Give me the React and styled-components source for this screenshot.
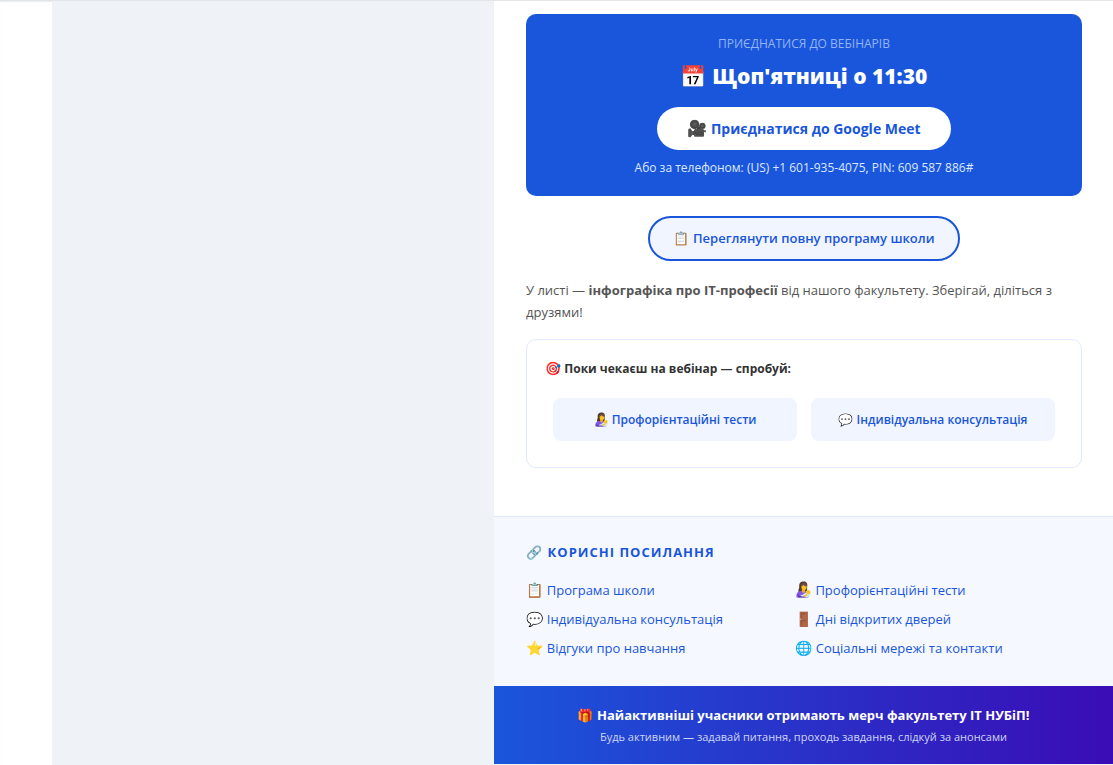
import styled, { createGlobalStyle } from "styled-components";

const GlobalStyle = createGlobalStyle`
  * {
    box-sizing: border-box;
  }
  body {
    margin: 0;
    background: #fff;
    color: #333;
    font-family: "Open Sans", "Noto Sans", "Noto Color Emoji", sans-serif;
  }
  p, h2, h3 {
    margin: 0;
  }
  a {
    text-decoration: none;
  }
`;

const Viewer = styled.div`
  min-height: 100vh;
  padding-left: 52px;
  border-top: 1px solid #e3e6e9;
  box-shadow: inset 0 1px 1px #e9ecef;
`;

const Backdrop = styled.div`
  min-height: calc(100vh - 1px);
  padding-left: 442px;
  background: #eff3f8;
`;

const Letter = styled.main`
  background: #fff;
`;

const Body = styled.div`
  padding: 13px 31px 48px 32px;
`;

const Emoji = styled.span`
  font-size: ${(props) => props.$size}px;
  line-height: 1;
`;

const MotherSvg = styled.svg`
  display: inline-block;
  width: ${(props) => props.$size}px;
  height: ${(props) => props.$size}px;
  vertical-align: -3px;
`;

const MeetCard = styled.section`
  display: flex;
  flex-direction: column;
  align-items: center;
  padding: 20px 24px 18px;
  border-radius: 10px;
  background: #1a56db;
  color: #fff;
  text-align: center;
`;

const Overline = styled.p`
  font-size: 12px;
  line-height: 20px;
  color: #93b4f5;
`;

const MeetTime = styled.h2`
  margin-top: 6px;
  font-size: 21px;
  line-height: 32px;
  font-weight: 800;
`;

const MeetButton = styled.a`
  margin-top: 15px;
  padding: 0 30px;
  border-radius: 22px;
  background: #fff;
  color: #1a56db;
  font-size: 14px;
  line-height: 43px;
  font-weight: 700;
`;

const Phone = styled.p`
  margin-top: 8px;
  font-size: 12px;
  line-height: 20px;
  color: #dbe8ff;
`;

const ProgramRow = styled.div`
  margin: 20px 0 18px;
  text-align: center;
`;

const ProgramLink = styled.a`
  display: inline-block;
  padding: 0 23px;
  border: 2px solid #1a56db;
  border-radius: 23px;
  background: #f0f5ff;
  color: #1a56db;
  font-size: 13px;
  line-height: 41px;
  font-weight: 600;
  vertical-align: top;
`;

const Note = styled.p`
  font-size: 13px;
  line-height: 22px;
  color: #555;
`;

const TryBox = styled.section`
  margin-top: 16px;
  padding: 18px;
  border: 1px solid #e0e9ff;
  border-radius: 10px;
`;

const TryTitle = styled.h3`
  font-size: 12px;
  line-height: 22px;
  font-weight: 700;
`;

const TryLinks = styled.div`
  display: grid;
  grid-template-columns: 1fr 1fr;
  gap: 14px;
  padding: 18px 8px 8px;
`;

const TryLink = styled.a`
  border-radius: 8px;
  background: #f0f5ff;
  color: #1a56db;
  font-size: 12px;
  line-height: 43px;
  font-weight: 600;
  text-align: center;
`;

const Useful = styled.section`
  padding: 24px 31px 23px 32px;
  border-top: 1px solid #dbe7ff;
  background: #f5f8ff;
`;

const UsefulTitle = styled.h3`
  margin-bottom: 13px;
  font-size: 13px;
  line-height: 22px;
  font-weight: 700;
  letter-spacing: 1px;
  text-transform: uppercase;
  color: #1a56db;
`;

const UsefulLinks = styled.ul`
  display: grid;
  grid-template-columns: 269fr 287fr;
  margin: 0;
  padding: 0;
  list-style: none;
`;

const UsefulItem = styled.li`
  height: 29px;
  font-size: 13px;
  line-height: 29px;
`;

const UsefulLink = styled.a`
  color: #1a56db;
`;

const Promo = styled.footer`
  padding: 18px 20px 17px;
  background: linear-gradient(90deg, #1a56db, #3a0cb5);
  color: #fff;
  text-align: center;
`;

const PromoTitle = styled.p`
  font-size: 13px;
  line-height: 23px;
  font-weight: 700;
`;

const PromoText = styled.p`
  font-size: 11px;
  line-height: 20px;
  color: #cdd5f6;
`;

const Mother = ({ size }) => (
  <MotherSvg $size={size} viewBox="0 0 32 32" aria-hidden="true">
    <path d="M8 11C7 3 12 1 16 1c6 0 8 4 7 9-1 4 1 6-1 9l-6 3-9-1c-2-3 1-6 1-10z" fill="#543930" />
    <path d="M3 31c-1-6 1-11 7-12h8c5 1 8 4 8 8l-1 4z" fill="#7e57e8" />
    <path d="M13 15h6v5c-2 3-5 3-6 0z" fill="#e8a91c" />
    <ellipse cx="17" cy="11" rx="5" ry="6" fill="#fcc21b" />
    <path d="M11 10c0-5 4-7 7-6 4 0 5 3 4 6-3 0-5-1-6-3-1 2-3 3-5 3z" fill="#6d4c41" />
    <path d="M11 27c5-1 8-6 13-7 4 0 6 3 5 6-1 4-8 5-14 5-4 0-6-3-4-4z" fill="#d5e8ed" />
    <circle cx="25" cy="21" r="4" fill="#fcc21b" />
    <path d="M5 25c3 4 9 5 14 3l1 3H6z" fill="#5e35b1" />
    <path d="M17 27l5-2c2 0 2 3 0 3l-5 2z" fill="#fcc21b" />
  </MotherSvg>
);

const links = [
  { icon: "📋", text: "Програма школи" },
  { text: "Профорієнтаційні тести" },
  { icon: "💬", text: "Індивідуальна консультація" },
  { icon: "🚪", text: "Дні відкритих дверей" },
  { icon: "⭐", text: "Відгуки про навчання" },
  { icon: "🌐", text: "Соціальні мережі та контакти" },
];

const App = () => {
  return (
    <>
      <GlobalStyle />
      <Viewer>
        <Backdrop>
          <Letter>
            <Body>
              <MeetCard>
                <Overline>ПРИЄДНАТИСЯ ДО ВЕБІНАРІВ</Overline>
                <MeetTime>📅 Щоп'ятниці о 11:30</MeetTime>
                <MeetButton href="#meet"><Emoji $size={16}>🎥</Emoji> Приєднатися до Google Meet</MeetButton>
                <Phone>Або за телефоном: (US) +1 601-935-4075, PIN: 609 587 886#</Phone>
              </MeetCard>
              <ProgramRow>
                <ProgramLink href="#program">📋 Переглянути повну програму школи</ProgramLink>
              </ProgramRow>
              <Note>
                У листі — <strong>інфографіка про ІТ-професії</strong> від нашого факультету. Зберігай, діліться з друзями!
              </Note>
              <TryBox>
                <TryTitle><Emoji $size={13}>🎯</Emoji> Поки чекаєш на вебінар — спробуй:</TryTitle>
                <TryLinks>
                  <TryLink href="#tests"><Mother size={15} /> Профорієнтаційні тести</TryLink>
                  <TryLink href="#consult">💬 Індивідуальна консультація</TryLink>
                </TryLinks>
              </TryBox>
            </Body>
            <Useful>
              <UsefulTitle><Emoji $size={13}>🔗</Emoji> Корисні посилання</UsefulTitle>
              <UsefulLinks>
                {links.map((link) => (
                  <UsefulItem key={link.text}>
                    <UsefulLink href="#links">
                      {link.icon ? <Emoji $size={14}>{link.icon}</Emoji> : <Mother size={17} />} {link.text}
                    </UsefulLink>
                  </UsefulItem>
                ))}
              </UsefulLinks>
            </Useful>
            <Promo>
              <PromoTitle>🎁 Найактивніші учасники отримають мерч факультету ІТ НУБіП!</PromoTitle>
              <PromoText>Будь активним — задавай питання, проходь завдання, слідкуй за анонсами</PromoText>
            </Promo>
          </Letter>
        </Backdrop>
      </Viewer>
    </>
  );
};

export default App;
